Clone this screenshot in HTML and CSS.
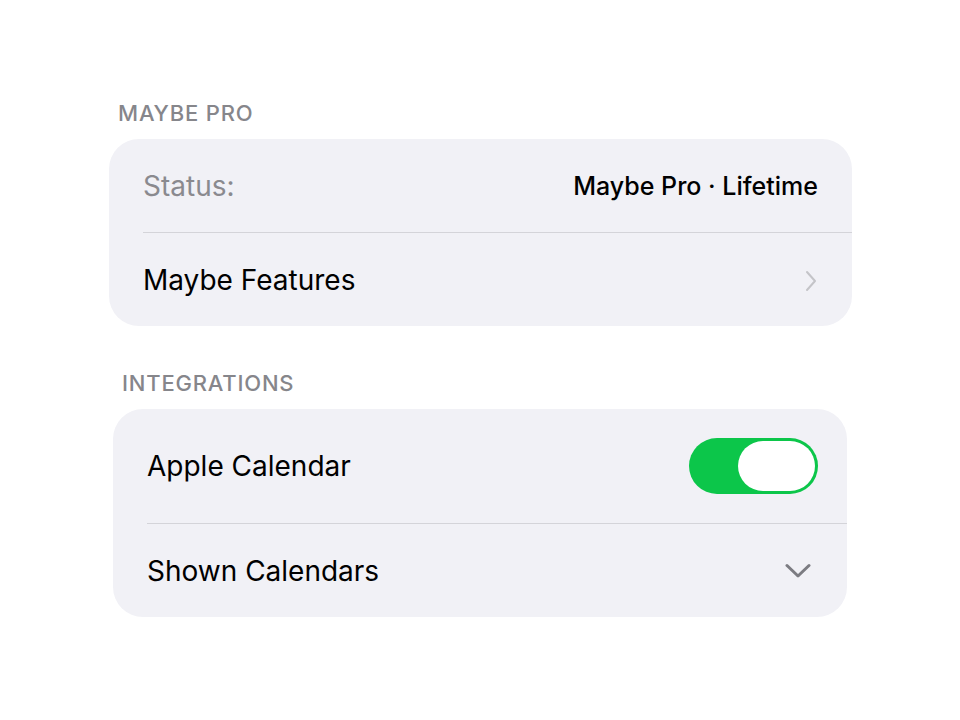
FILE: index.html
```html
<!DOCTYPE html>
<html lang="en">
<head>
    <meta charset="UTF-8">
    <meta name="viewport" content="width=device-width, initial-scale=1.0">
    <title>Settings</title>
    <link rel="stylesheet" href="styles.css">
</head>
<body>
    <div class="page">
        <section class="group group-pro">
            <h3 class="group-title">Maybe Pro</h3>
            <div class="card">
                <div class="row">
                    <span class="label muted">Status:</span>
                    <span class="value">Maybe Pro · Lifetime</span>
                </div>
                <div class="row">
                    <span class="label">Maybe Features</span>
                    <svg class="chevron-right" width="14" height="24" viewBox="0 0 14 24">
                        <path d="M3 3 L11 12 L3 21" fill="none" stroke="#c4c4c8" stroke-width="2" stroke-linecap="round" stroke-linejoin="round"/>
                    </svg>
                </div>
            </div>
        </section>

        <section class="group group-integrations">
            <h3 class="group-title">Integrations</h3>
            <div class="card">
                <div class="row row-tall">
                    <span class="label">Apple Calendar</span>
                    <div class="toggle on"><div class="knob"></div></div>
                </div>
                <div class="row">
                    <span class="label">Shown Calendars</span>
                    <svg class="chevron-down" width="26" height="16" viewBox="0 0 26 16">
                        <path d="M2 2.5 L13 13 L24 2.5" fill="none" stroke="#7c7c82" stroke-width="3" stroke-linecap="round" stroke-linejoin="round"/>
                    </svg>
                </div>
            </div>
        </section>
    </div>
</body>
</html>
```

FILE: styles.css
```css
body {
    margin: 0;
    background: #fff;
    font-family: Inter, "Noto Sans", sans-serif;
    color: #000;
}
.page {
    padding-top: 100px;
}
.group-pro {
    margin-left: 109px;
    width: 743px;
}
.group-integrations {
    margin-top: 44px;
    margin-left: 113px;
    width: 734px;
}
.group-title {
    margin: 0 0 13px 9px;
    font-size: 22px;
    line-height: 26px;
    font-weight: 500;
    color: #86868b;
    text-transform: uppercase;
    letter-spacing: 0.8px;
}
.card {
    background: #f1f1f6;
    border-radius: 30px;
    overflow: hidden;
}
.row {
    height: 93px;
    margin-left: 34px;
    padding-right: 34px;
    display: flex;
    align-items: center;
    justify-content: space-between;
}
.row + .row {
    border-top: 1px solid #d4d4d9;
}
.row-tall {
    height: 114px;
    padding-right: 29px;
}
.label {
    font-size: 28px;
    line-height: 34px;
}
.muted {
    color: #8a8a8f;
}
.value {
    font-size: 25px;
    font-weight: 500;
}
.chevron-right {
    margin-top: 2px;
}
.chevron-down {
    margin-right: 2px;
}
.toggle {
    width: 129px;
    height: 56px;
    border-radius: 28px;
    background: #e3e3e8;
    display: flex;
    align-items: center;
    padding: 0 3px;
    box-sizing: border-box;
}
.toggle.on {
    background: #0cc64a;
    justify-content: flex-end;
}
.knob {
    width: 77px;
    height: 50px;
    border-radius: 25px;
    background: #fff;
}
```
